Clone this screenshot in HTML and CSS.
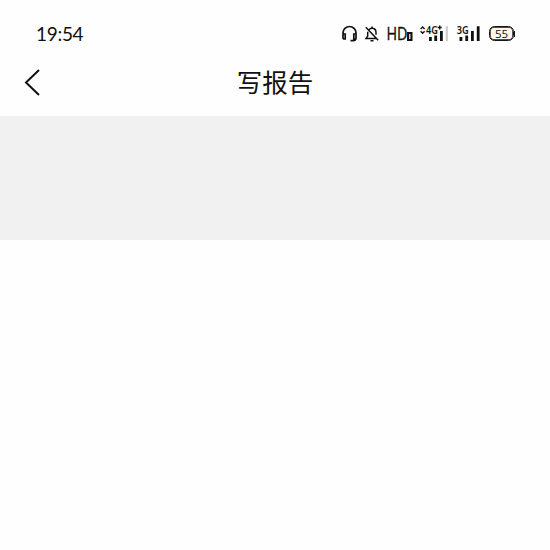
FILE: index.html
```html
<!DOCTYPE html>
<html lang="zh-CN">
<head>
<meta charset="utf-8">
<title>写报告</title>
<link rel="stylesheet" href="styles.css">
</head>
<body>
<header class="status">
  <time class="clock">19:54</time>
  <div class="indicators">
    <svg class="headset" width="17" height="18" viewBox="0 0 17 18" fill="none" stroke="currentColor" stroke-width="1.7"><path d="M2 10V8a6.5 6.5 0 0 1 13 0v5q0 2.6-2.8 2.6H9.5M2 9h2.200v5H3.300Q2 14 2 12.500V9M15 9h-2.200v5h1.300"/></svg>
    <svg class="bell" width="16" height="18" viewBox="0 0 16 18" fill="none" stroke="currentColor" stroke-width="1.5"><path d="M5 4.800Q6 3.300 8 3.300c2.600 0 4 1.800 4 4.300v2.200M3.700 6.800v4.300L2 13.500h10M8 1.500v2M6.500 15.800h3M1.800 2.200l12.400 13"/></svg>
    <svg class="hd" width="27" height="18" viewBox="0 0 27 18"><text class="hd-label" x="-.5" y="15.200" textLength="21" lengthAdjust="spacingAndGlyphs">HD</text><path d="M20 7h5.500v9H20zM22.200 9v5h1.200V9z" fill="currentColor" fill-rule="evenodd"/></svg>
    <svg class="signal-main" width="29" height="18" viewBox="0 0 29 18"><path d="M.6 4l2-2 2 2M.6 6.300l2 2 2-2M17.700 2.500h4M19.700.5v4" fill="none" stroke="currentColor" stroke-width="1.400"/><text class="net" x="6" y="9" textLength="12" lengthAdjust="spacingAndGlyphs">4G</text><path d="M9 12h2.800v4H9zM14.300 10.500h2.800V16h-2.800zM20 6h2.800v10H20z" fill="currentColor"/><path class="faint" d="M25.700 1.200h2.200V16h-2.200z"/></svg>
    <svg class="signal-alt" width="24" height="18" viewBox="0 0 24 18"><text class="net" x="-.2" y="9" textLength="12" lengthAdjust="spacingAndGlyphs">3G</text><path d="M2.500 12h2.800v4H2.500zM8.300 10.500h2.800V16H8.300zM14 6h2.800v10H14zM19.800 1.200h2.800V16h-2.800z" fill="currentColor"/></svg>
    <div class="battery"><span class="level">55</span></div>
  </div>
</header>
<nav class="titlebar">
  <svg class="back" width="18" height="28" viewBox="0 0 18 28" fill="none" stroke="currentColor" stroke-width="2"><path d="M16 2L3 14.500L16 27"/></svg>
  <h1 class="title">写报告</h1>
</nav>
<section class="banner"></section>
<main class="content"></main>
</body>
</html>
```
FILE: styles.css
```css
* { box-sizing: border-box; }
body {
  margin: 0;
  height: 550px;
  display: flex;
  flex-direction: column;
  background: #fefefe;
  color: #111;
  font-family: "Noto Sans", "Noto Sans CJK SC", sans-serif;
}
.status {
  height: 56px;
  padding: 0 36px;
  display: flex;
  justify-content: space-between;
}
.clock {
  padding-top: 22px;
  font: 19px/24px "Lato", sans-serif;
  letter-spacing: -0.3px;
}
.indicators {
  display: flex;
  padding-top: 25px;
}
.indicators svg { display: block; overflow: visible; flex: none; }
.headset { margin-right: 6px; }
.bell { margin-right: 7px; }
.hd { margin-right: 6px; }
.signal-main { margin-right: 8px; }
.signal-alt { margin-right: 8px; }
.hd-label { font: 18px "Open Sans", sans-serif; fill: #111; stroke: #111; stroke-width: 0.35px; }
.net { font: 600 11px "Noto Sans", sans-serif; fill: #111; }
.faint { fill: #ccc; }
.battery {
  position: relative;
  display: flex;
  align-items: center;
  justify-content: center;
  width: 25px;
  height: 15px;
  margin-top: 1px;
  border: 1px solid #181512;
  border-radius: 5.5px;
  box-shadow: inset 0 0 0 0.7px #181512;
  background: #fff8e8;
  font: 11.5px/12px "Open Sans", sans-serif;
}
.battery::after {
  content: "";
  position: absolute;
  right: -2px;
  top: 4px;
  width: 1px;
  height: 6px;
  background: #181512;
}
.titlebar {
  height: 60px;
  padding: 0 23px;
  display: grid;
  grid-template-columns: 18px 1fr 18px;
}
.back { margin-top: 12px; }
.title {
  margin: 6px 0 0;
  text-align: center;
  font: 400 25.5px/38px "Noto Sans CJK SC", sans-serif;
}
.banner { height: 124px; background: #f1f1f1; }
.content { flex: 1; }
```
